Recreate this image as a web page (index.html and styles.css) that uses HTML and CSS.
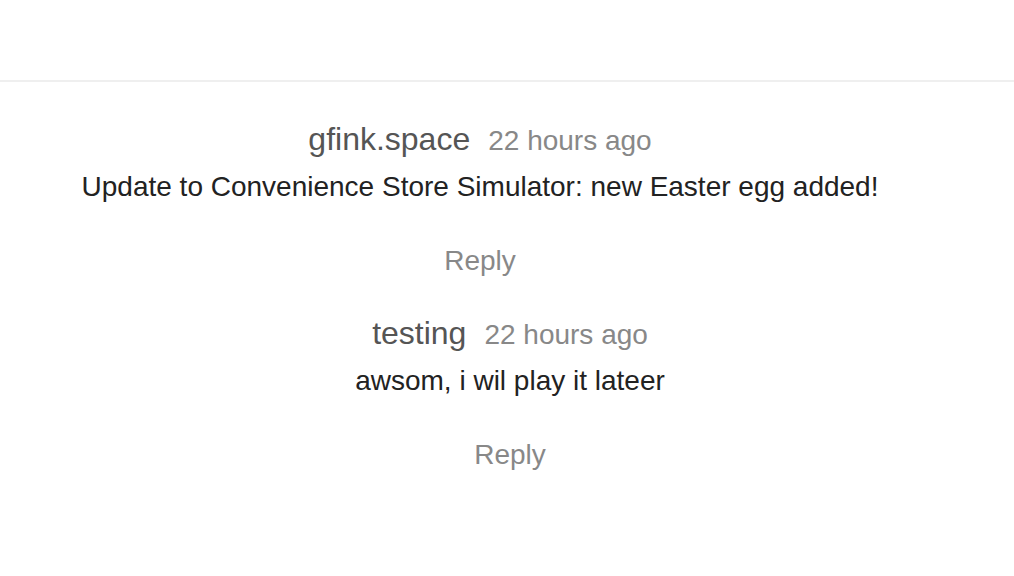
FILE: index.html
```html
<!DOCTYPE html>
<html>
<head>
<meta charset="utf-8">
<link rel="stylesheet" href="styles.css">
</head>
<body>
<div class="topbar"></div>
<div class="thread">
  <div class="comment">
    <div class="meta"><span class="author">gfink.space</span><span class="time">22 hours ago</span></div>
    <div class="text">Update to Convenience Store Simulator: new Easter egg added!</div>
    <div class="reply">Reply</div>
    <div class="comment nested">
      <div class="meta"><span class="author">testing</span><span class="time">22 hours ago</span></div>
      <div class="text">awsom, i wil play it lateer</div>
      <div class="reply">Reply</div>
    </div>
  </div>
</div>
</body>
</html>
```
FILE: styles.css
```css
html, body {
  margin: 0;
  padding: 0;
  background: #fff;
  font-family: "Liberation Sans", Arial, Helvetica, sans-serif;
}
.topbar {
  height: 80px;
  border-bottom: 2px solid #efefef;
}
.thread {
  width: 960px;
  padding-top: 37px;
}
.comment {
  display: flex;
  flex-direction: column;
  align-items: center;
  text-align: center;
}
.nested {
  margin-left: 60px;
  margin-top: 32px;
  align-self: stretch;
}
.meta {
  display: flex;
  align-items: baseline;
  justify-content: center;
  gap: 18px;
  line-height: 40px;
}
.author {
  font-size: 32px;
  color: #555;
}
.time {
  font-size: 28px;
  color: #888;
}
.text {
  font-size: 28px;
  line-height: 40px;
  color: #222;
  margin-top: 6px;
}
.reply {
  font-size: 28px;
  line-height: 40px;
  color: #888;
  margin-top: 34px;
}
.nested .text {
  margin-top: 6px;
}
.nested .reply {
  margin-top: 34px;
}
```
